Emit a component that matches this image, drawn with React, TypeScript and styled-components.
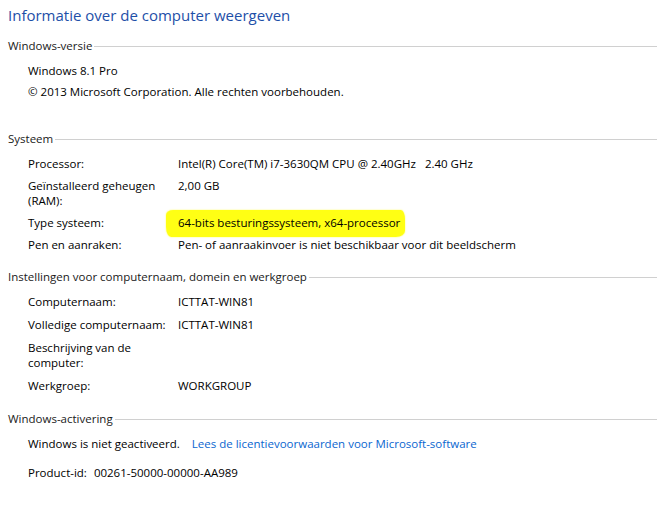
import React from "react";
import styled, { createGlobalStyle } from "styled-components";

const Global = createGlobalStyle`
  html, body { margin: 0; padding: 0; background: #ffffff; }
  body { font-family: "Segoe UI", "Open Sans", "Noto Sans", sans-serif; font-size: 11.5px; color: #000; }
`;

const Page = styled.div`
  width: 657px;
  height: 507px;
  box-sizing: border-box;
  padding: 4px 0 0 8px;
  overflow: hidden;
`;

const Title = styled.h1`
  margin: 0 0 12px 0;
  font-weight: 400;
  font-size: 15px;
  line-height: 22px;
  color: #1e4fa8;
`;

const Section = styled.section<{ $after: number }>`
  margin-bottom: ${(p) => p.$after}px;
`;

const Header = styled.div`
  display: flex;
  align-items: center;
  gap: 2px;
  line-height: 15px;
  height: 15px;
`;

const HeaderText = styled.span`
  white-space: nowrap;
  color: #1a1a1a;
`;

const Rule = styled.div`
  flex: 1;
  height: 1px;
  margin-top: 1px;
  background: #d0d0d0;
`;

const Rows = styled.div<{ $gap: number }>`
  margin-top: 10px;
  padding-left: 20px;
  display: flex;
  flex-direction: column;
  gap: ${(p) => p.$gap}px;
`;

const Row = styled.div`
  display: grid;
  grid-template-columns: 150px 1fr;
  line-height: 15px;
`;

const Plain = styled.div`
  line-height: 15px;
`;

const Label = styled.div`
  max-width: 148px;
`;

const Value = styled.div`
  white-space: pre;
`;

const Marker = styled.span`
  background: #ffff14;
  padding: 5px 5px 7px 12px;
  margin-left: -12px;
  border-radius: 7px 4px 9px 5px / 5px 9px 6px 10px;
  box-shadow: 0 0 1.5px #ffff30;
`;

const Link = styled.span`
  color: #0a66cf;
  margin-left: 12px;
`;

const ProductGap = styled.span`
  margin-left: 4px;
`;

const data = {
  systeem: [
    ["Processor:", "Intel(R) Core(TM) i7-3630QM CPU @ 2.40GHz   2.40 GHz"],
    ["Geïnstalleerd geheugen (RAM):", "2,00 GB"],
    ["Type systeem:", "__marker__"],
    ["Pen en aanraken:", "Pen- of aanraakinvoer is niet beschikbaar voor dit beeldscherm"],
  ],
  naam: [
    ["Computernaam:", "ICTTAT-WIN81"],
    ["Volledige computernaam:", "ICTTAT-WIN81"],
    ["Beschrijving van de computer:", ""],
    ["Werkgroep:", "WORKGROUP"],
  ],
};

export default function App() {
  return (
    <>
      <Global />
      <Page>
        <Title>Informatie over de computer weergeven</Title>

        <Section $after={32}>
          <Header>
            <HeaderText>Windows-versie</HeaderText>
            <Rule />
          </Header>
          <Rows $gap={6}>
            <Plain>Windows 8.1 Pro</Plain>
            <Plain>© 2013 Microsoft Corporation. Alle rechten voorbehouden.</Plain>
          </Rows>
        </Section>

        <Section $after={17}>
          <Header>
            <HeaderText>Systeem</HeaderText>
            <Rule />
          </Header>
          <Rows $gap={7}>
            {data.systeem.map(([l, v]) => (
              <Row key={l}>
                <Label>{l}</Label>
                <Value>
                  {v === "__marker__" ? (
                    <Marker>64-bits besturingssysteem, x64-processor</Marker>
                  ) : (
                    v
                  )}
                </Value>
              </Row>
            ))}
          </Rows>
        </Section>

        <Section $after={18}>
          <Header>
            <HeaderText>Instellingen voor computernaam, domein en werkgroep</HeaderText>
            <Rule />
          </Header>
          <Rows $gap={8}>
            {data.naam.map(([l, v]) => (
              <Row key={l}>
                <Label>{l}</Label>
                <Value>{v}</Value>
              </Row>
            ))}
          </Rows>
        </Section>

        <Section $after={0}>
          <Header>
            <HeaderText>Windows-activering</HeaderText>
            <Rule />
          </Header>
          <Rows $gap={14}>
            <Plain>
              Windows is niet geactiveerd.
              <Link>Lees de licentievoorwaarden voor Microsoft-software</Link>
            </Plain>
            <Plain>
              Product-id:<ProductGap> 00261-50000-00000-AA989</ProductGap>
            </Plain>
          </Rows>
        </Section>
      </Page>
    </>
  );
}
